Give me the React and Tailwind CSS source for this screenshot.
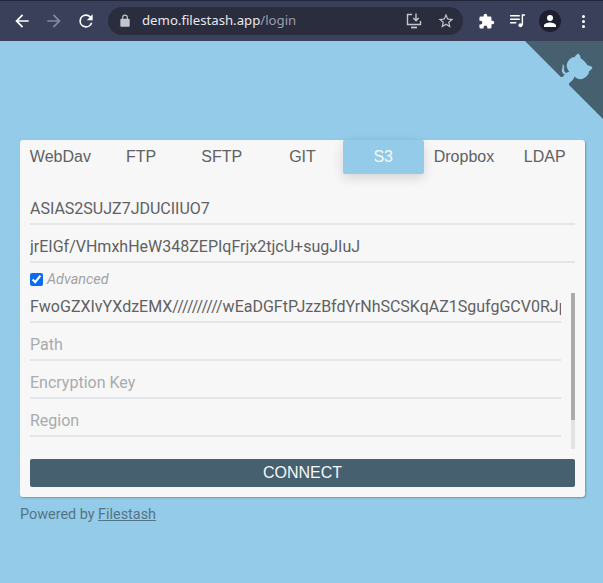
import React from 'react';

const TABS = ['WebDav', 'FTP', 'SFTP', 'GIT', 'S3', 'Dropbox', 'LDAP'];
const TOKEN = 'FwoGZXIvYXdzEMX//////////wEaDGFtPJzzBfdYrNhSCSKqAZ1SgufgGCV0RJpLmQ8nT2aXv';

function Icon({ d, className = '', fill = 'currentColor' }) {
    return (
        <svg viewBox="0 0 24 24" className={className} fill={fill}>
            <path d={d} />
        </svg>
    );
}

function TopBar() {
    return (
        <div className="h-[41px] bg-[#3a405a] border-t border-[#23263a] flex items-center text-white">
            <Icon className="w-5 h-5 ml-[12px]" d="M20 11H7.83l5.59-5.59L12 4l-8 8 8 8 1.41-1.41L7.83 13H20v-2z" />
            <Icon className="w-5 h-5 ml-[12px] text-[#868aa0]" d="M12 4l-1.41 1.41L16.17 11H4v2h12.17l-5.58 5.59L12 20l8-8z" />
            <Icon className="w-5 h-5 ml-[12px]" d="M17.65 6.35A7.96 7.96 0 0 0 12 4a8 8 0 1 0 7.73 10h-2.08A6 6 0 1 1 12 6c1.66 0 3.14.69 4.22 1.78L13 11h7V4l-2.35 2.35z" />
            <div className="ml-[12px] w-[355px] h-[28px] rounded-full bg-[#2a2d3d] flex items-center shrink-0">
                <Icon className="w-[14px] h-[14px] ml-[10px] text-[#c4c6cf]" d="M18 8h-1V6A5 5 0 0 0 7 6v2H6a2 2 0 0 0-2 2v10c0 1.1.9 2 2 2h12a2 2 0 0 0 2-2V10a2 2 0 0 0-2-2zM9 6a3 3 0 0 1 6 0v2H9V6z" />
                <span className="ml-[10px] text-[13.2px] text-[#e8e9ee] font-['Noto_Sans','Roboto',sans-serif]">
                    demo.filestash.app<span className="text-[#9b9eac]">/login</span>
                </span>
                <svg viewBox="0 0 18 18" className="w-[18px] h-[18px] ml-auto text-[#c4c6cf]" fill="none" stroke="currentColor" strokeWidth="1.4">
                    <path d="M7 2.5H2.5v10h13V9" />
                    <path d="M11 1.5v7M8.3 6l2.7 2.8L13.7 6" />
                    <path d="M6 15.5h6" strokeWidth="1.8" />
                </svg>
                <Icon className="w-[18px] h-[18px] ml-[14px] mr-[8px] text-[#c4c6cf]" d="M22 9.24l-7.19-.62L12 2 9.19 8.63 2 9.24l5.46 4.73L5.82 21 12 17.27 18.18 21l-1.63-7.03L22 9.24zM12 15.4l-3.76 2.27 1-4.28-3.32-2.88 4.38-.38L12 6.1l1.71 4.04 4.38.38-3.32 2.88 1 4.28L12 15.4z" />
            </div>
            <Icon className="w-[17px] h-[17px] ml-[15px]" d="M20.5 11H19V7a2 2 0 0 0-2-2h-4V3.5a2.5 2.5 0 0 0-5 0V5H4a2 2 0 0 0-2 2v3.8h1.5a2.7 2.7 0 0 1 0 5.4H2V20a2 2 0 0 0 2 2h3.8v-1.5a2.7 2.7 0 0 1 5.4 0V22H17a2 2 0 0 0 2-2v-4h1.5a2.5 2.5 0 0 0 0-5z" />
            <svg viewBox="0 0 18 16" className="w-[16px] h-[14px] ml-[15px]" fill="none" stroke="currentColor" strokeWidth="1.6">
                <path d="M0 2h11M0 6h11M0 10h7" />
                <path d="M14 12.5V1.2h3" />
                <circle cx="11.8" cy="12.8" r="2.3" fill="currentColor" stroke="none" />
            </svg>
            <div className="w-[22px] h-[22px] ml-[13px] rounded-full bg-[#1d1f2e] flex items-center justify-center">
                <Icon className="w-[18px] h-[18px]" d="M12 12a4 4 0 1 0 0-8 4 4 0 0 0 0 8zm0 2c-2.67 0-8 1.34-8 4v2h16v-2c0-2.66-5.33-4-8-4z" />
            </div>
            <div className="ml-[21px] flex flex-col gap-[2px]">
                <span className="w-[3px] h-[3px] rounded-full bg-white" />
                <span className="w-[3px] h-[3px] rounded-full bg-white" />
                <span className="w-[3px] h-[3px] rounded-full bg-white" />
            </div>
        </div>
    );
}

function GithubCorner() {
    return (
        <svg viewBox="0 0 250 250" className="absolute top-[41px] right-0 w-[78px] h-[78px] text-[#93cbe8] fill-[#46606f]">
            <path d="M0,0 L115,115 L130,115 L142,142 L250,250 L250,0 Z" />
            <path fill="currentColor" d="M128.3,109.0 C113.8,99.7 119.0,89.6 119.0,89.6 C122.0,82.7 120.5,78.6 120.5,78.6 C119.2,72.0 123.4,76.3 123.4,76.3 C127.3,80.9 125.5,87.3 125.5,87.3 C122.9,97.6 130.6,101.9 134.4,103.2" />
            <path fill="currentColor" d="M115.0,115.0 C114.9,115.1 118.7,116.5 119.8,115.4 L133.7,101.6 C136.9,99.2 139.9,98.4 142.2,98.6 C133.8,88.0 127.5,74.4 143.8,58.0 C148.5,53.4 154.0,51.2 159.7,51.0 C160.3,49.4 163.2,43.6 171.4,40.1 C171.4,40.1 176.1,42.5 178.8,56.2 C183.1,58.6 187.2,61.8 190.9,65.4 C194.5,69.0 197.7,73.2 200.1,77.6 C213.8,80.2 216.3,84.9 216.3,84.9 C212.7,93.1 206.9,96.0 205.4,96.6 C205.1,102.4 203.0,107.8 198.3,112.5 C181.9,128.9 168.3,122.5 157.7,114.1 C157.9,116.9 156.7,120.9 152.7,124.9 L141.0,136.5 C139.8,137.7 141.6,141.9 141.8,141.8 Z" />
        </svg>
    );
}

function Field({ value, placeholder, className = '' }) {
    return (
        <input
            readOnly
            value={value ?? ''}
            placeholder={placeholder}
            className={`block w-full h-[30px] pb-[1px] bg-transparent border-b-2 border-[#e2e6ea] text-[16px] text-[#5f6163] placeholder:text-[#a9abad] outline-none ${className}`}
        />
    );
}

export default function App() {
    return (
        <div className="relative w-[603px] h-[583px] overflow-hidden bg-[#93cbe8] font-['Roboto',sans-serif]">
            <TopBar />
            <GithubCorner />
            <div className="ml-5 mt-[99px] w-[565px] h-[357px] rounded-[3px] bg-[#f7f7f7] shadow-[1px_1px_2px_rgba(0,0,0,0.25)]">
                <div className="flex h-[34px] font-['Liberation_Sans',sans-serif]">
                    {TABS.map(tab => (
                        <div
                            key={tab}
                            className={`flex-1 flex items-center justify-center text-[16px] rounded-[2px] ${tab === 'S3' ? 'bg-[#93cbe8] text-[#f7f7f7] shadow-[0_4px_12px_rgba(0,0,0,0.14)]' : 'text-[#5f6163]'}`}
                        >
                            {tab}
                        </div>
                    ))}
                </div>
                <div className="px-[10px] pt-[21px]">
                    <Field value="ASIAS2SUJZ7JDUCIIUO7" />
                    <Field value="jrEIGf/VHmxhHeW348ZEPIqFrjx2tjcU+sugJIuJ" className="mt-2" />
                    <label className="flex items-center h-[30px] pt-[2px]">
                        <input type="checkbox" readOnly checked className="w-[13px] h-[13px] m-0 accent-[#0b6cf0]" />
                        <span className="ml-1 pt-[1px] text-[14.4px] italic text-[#a0a2a4]">Advanced</span>
                    </label>
                    <div className="flex h-[156px]">
                        <div className="w-[531px] flex flex-col gap-2">
                            <Field value={TOKEN} />
                            <Field placeholder="Path" />
                            <Field placeholder="Encryption Key" />
                            <Field placeholder="Region" />
                        </div>
                        <div className="ml-auto w-[4px] bg-[#e3e3e3]">
                            <div className="h-[127px] bg-[#ababab]" />
                        </div>
                    </div>
                    <button className="block w-full h-[28px] mt-[10px] rounded-[2px] bg-[#46606f] text-[16px] text-[#f7f7f7] text-center font-['Liberation_Sans',sans-serif]">
                        CONNECT
                    </button>
                </div>
            </div>
            <div className="ml-5 mt-[8px] text-[14.4px] leading-[20px] text-[#46606f] opacity-80">
                Powered by <span className="underline">Filestash</span>
            </div>
        </div>
    );
}
